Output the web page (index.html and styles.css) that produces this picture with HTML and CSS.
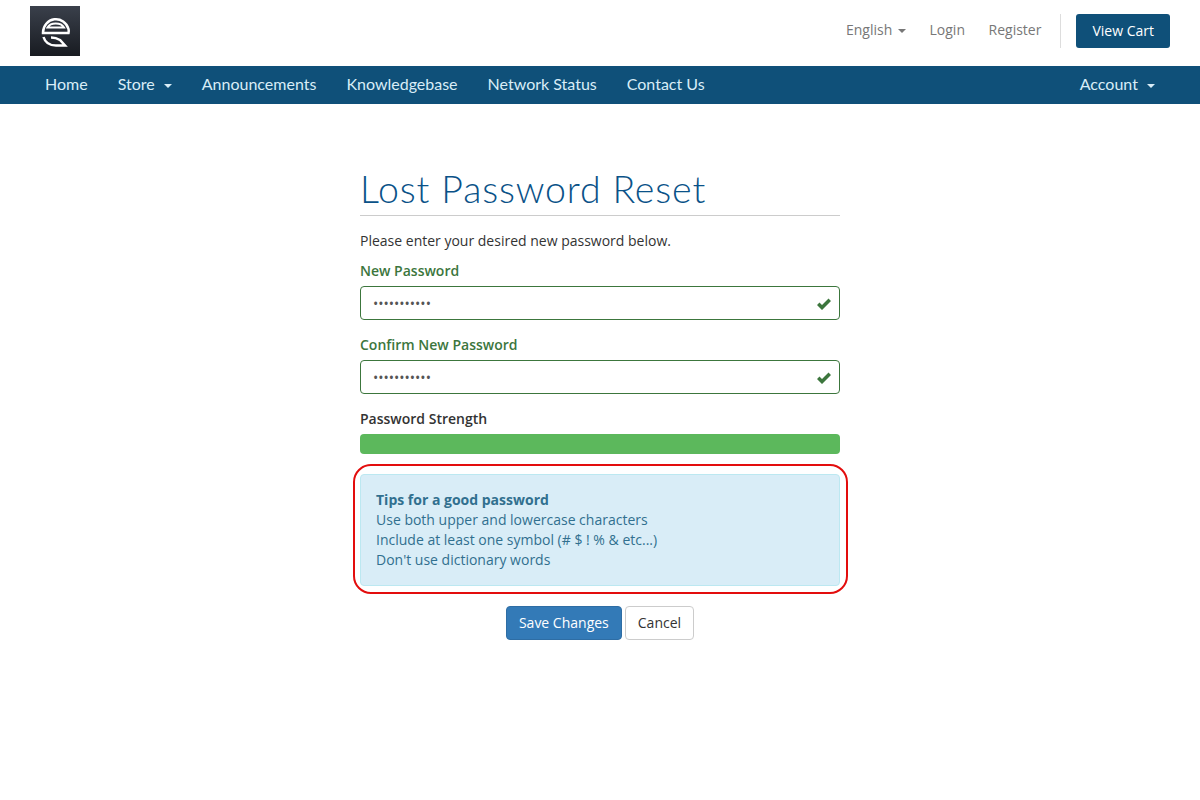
FILE: index.html
```html
<!DOCTYPE html>
<html lang="en">
<head>
<meta charset="utf-8">
<title>Lost Password Reset</title>
<link rel="stylesheet" href="styles.css">
</head>
<body>
<header class="topbar">
  <a class="logo" href="#">
    <svg viewBox="0 0 50 50" width="50" height="50" aria-hidden="true">
      <defs><linearGradient id="lg" x1="0" y1="0" x2="0" y2="1"><stop offset="0" stop-color="#3a404b"/><stop offset="1" stop-color="#181b21"/></linearGradient></defs>
      <rect width="50" height="50" fill="url(#lg)"/>
      <g fill="none" stroke="#fff" stroke-width="2.500">
        <path d="M13 26.500 A13 13.500 0 0 1 38.500 23 Q39 25 38.500 27 H13 Z"/>
        <path d="M17.500 21.500 A9 6.500 0 0 1 34 21.500 Z" stroke-width="2"/>
        <path d="M13.500 31 Q16 39.500 26 39.500 H35 L30 34 Q26 31.500 21 31.500"/>
      </g>
    </svg>
  </a>
  <nav class="toplinks">
    <a href="#" class="toplink">English <span class="caret"></span></a>
    <a href="#" class="toplink">Login</a>
    <a href="#" class="toplink">Register</a>
    <span class="divider"></span>
    <a href="#" class="cart">View Cart</a>
  </nav>
</header>
<nav class="mainnav">
  <a href="#">Home</a>
  <a href="#">Store <span class="caret gap"></span></a>
  <a href="#">Announcements</a>
  <a href="#">Knowledgebase</a>
  <a href="#">Network Status</a>
  <a href="#">Contact Us</a>
  <a href="#" class="account">Account <span class="caret gap"></span></a>
</nav>
<main class="panel">
  <h1>Lost Password Reset</h1>
  <p class="intro">Please enter your desired new password below.</p>
  <form>
    <div class="field">
      <label for="p1">New Password</label>
      <div class="inputwrap">
        <input id="p1" type="password" value="abcdefghijk">
        <svg class="check" viewBox="0 0 16 14" width="16" height="14" aria-hidden="true"><path d="M1 8 L3.500 5.500 L6 8 L12.500 1.500 L15 4 L6 13 Z" fill="#3c763d"/></svg>
      </div>
    </div>
    <div class="field">
      <label for="p2">Confirm New Password</label>
      <div class="inputwrap">
        <input id="p2" type="password" value="abcdefghijk">
        <svg class="check" viewBox="0 0 16 14" width="16" height="14" aria-hidden="true"><path d="M1 8 L3.500 5.500 L6 8 L12.500 1.500 L15 4 L6 13 Z" fill="#3c763d"/></svg>
      </div>
    </div>
    <div class="strength">
      <div class="strength-label">Password Strength</div>
      <div class="bar"><div class="bar-fill"></div></div>
    </div>
    <div class="tips">
      <strong>Tips for a good password</strong><br>
      Use both upper and lowercase characters<br>
      Include at least one symbol (# $ ! % &amp; etc...)<br>
      Don't use dictionary words
    </div>
    <div class="actions">
      <button type="button" class="btn primary">Save Changes</button>
      <button type="button" class="btn">Cancel</button>
    </div>
  </form>
</main>
</body>
</html>
```
FILE: styles.css
```css
* { box-sizing: border-box; }
body { margin: 0; background: #fff; color: #333; font: 14px/20px "Open Sans", sans-serif; }
a { text-decoration: none; color: inherit; }
.topbar { height: 66px; padding: 6px 30px 0; display: flex; justify-content: space-between; align-items: flex-start; }
.logo { display: block; width: 50px; height: 50px; }
.logo svg { display: block; }
.toplinks { display: flex; align-items: center; margin-top: 8px; height: 34px; }
.toplink { color: #777; margin-right: 23.6px; padding-bottom: 2px; }
.caret { display: inline-block; width: 0; height: 0; margin-left: 2px; vertical-align: middle; border-top: 4px solid; border-left: 4px solid transparent; border-right: 4px solid transparent; }
.caret.gap { margin-left: 5px; }
.divider { width: 1px; height: 34px; background: #ddd; margin-right: 15px; margin-left: -4.6px; }
.cart { background: #0f5079; color: #fff; border-radius: 3px; padding: 7px 16px; height: 34px; }
.mainnav { height: 38px; background: #0f5079; padding: 0 30px 2px; display: flex; align-items: center; font: 16px/20px Lato, sans-serif; color: #d9edf7; }
.mainnav a { padding: 0 15px; }
.mainnav .account { margin-left: auto; }
.panel { width: 480px; margin: 0 auto; padding-top: 62px; }
h1 { margin: 0; padding-bottom: 4px; border-bottom: 1px solid #ccc; font: 300 37.5px/45px Lato, sans-serif; letter-spacing: 0.85px; color: #0a5288; height: 50px; }
.intro { margin: 15px 0 10px; }
.field { margin-bottom: 15px; }
label { display: block; font-weight: 600; color: #3c763d; margin-bottom: 5px; }
.inputwrap { position: relative; }
input { display: block; width: 100%; height: 34px; padding: 6px 12px; border: 1px solid #3c763d; border-radius: 4px; font: 14px/20px "Open Sans", sans-serif; color: #555; outline: none; }
.check { position: absolute; right: 8px; top: 11px; }
.strength-label { font-weight: 600; margin-bottom: 5px; }
.bar { height: 20px; background: #f5f5f5; border-radius: 4px; overflow: hidden; margin-bottom: 20px; }
.bar-fill { height: 100%; width: 100%; background: #5cb85c; }
.tips { position: relative; padding: 15px; background: #d9edf7; border: 1px solid #bce8f1; border-radius: 4px; color: #31708f; margin-bottom: 20px; }
.tips::after { content: ""; position: absolute; inset: -11px -9px -9px -8px; border: 2.5px solid #e30d0d; border-radius: 18px; pointer-events: none; }
.actions { display: flex; justify-content: center; gap: 3px; }
.btn { height: 34px; padding: 6px 12px; border: 1px solid #ccc; border-radius: 4px; background: #fff; color: #333; font: 14px/20px "Open Sans", sans-serif; }
.btn.primary { background: #337ab7; border-color: #2e6da4; color: #fff; }
```
